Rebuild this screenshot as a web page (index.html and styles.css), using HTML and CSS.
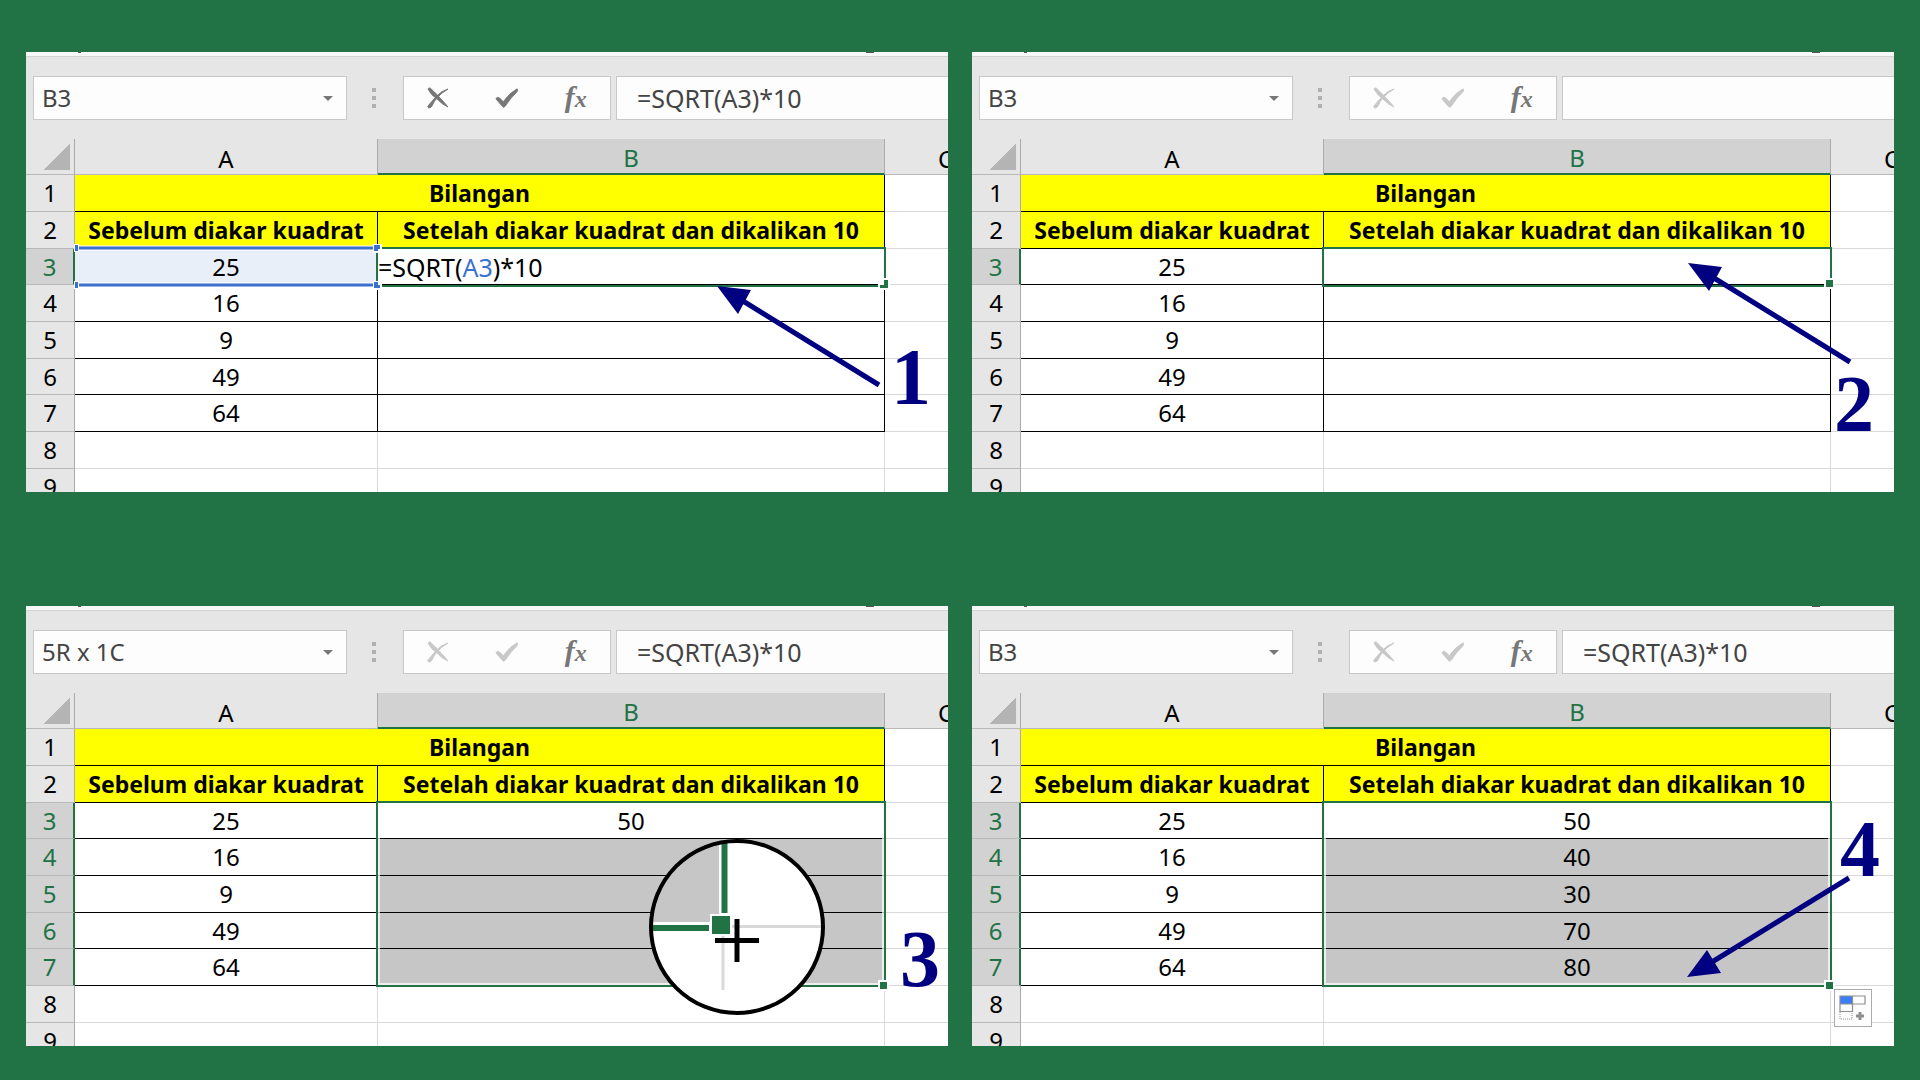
FILE: index.html
```
<!DOCTYPE html>
<html lang="id">
<head>
<meta charset="utf-8">
<title>SQRT di Excel</title>
<link rel="stylesheet" href="styles.css">
</head>
<body>
<svg class="defs" aria-hidden="true">
  <symbol id="cancel" viewBox="0 0 24 24"><path d="M2 3C3 1 5 2 7 5Q11 8 14 12Q18 16 22 21Q17 19 11 13Q5 9 2 3Z"/><path d="M22 3Q15 7 11 12Q8 15 6 20C4 23 1 22 2 20Q6 15 10 11Q15 5 22 3Z"/></symbol>
  <symbol id="accept" viewBox="0 0 26 24"><path d="M1 13Q2 10 5 12L9 16Q15 7 24 2Q25 3 24 5Q16 13 11 21Q9 23 8 21Z"/></symbol>
  <symbol id="arrow" viewBox="0 0 164 102" overflow="visible"><path d="M26 15L162 99" stroke="#000080" stroke-width="5"/><path d="M0 0L34 4L21 28Z" fill="#000080"/></symbol>
</svg>
<main class="board">

  <section class="panel">
    <div class="ribbon"></div>
    <div class="bar">
      <div class="namebox"><input class="name" aria-label="Kotak nama" value="B3"><button class="drop" aria-label="Daftar nama"></button></div>
      <div class="dots"><i></i><i></i><i></i></div>
      <div class="tools">
        <button aria-label="Batal"><svg class="icon"><use href="#cancel"/></svg></button>
        <button aria-label="Masukkan"><svg class="icon"><use href="#accept"/></svg></button>
        <button class="fx" aria-label="Sisipkan fungsi">f<span>x</span></button>
      </div>
      <input class="formula" aria-label="Rumus" value="=SQRT(A3)*10">
    </div>
    <table class="sheet">
      <colgroup><col class="c-row"><col class="c-a"><col class="c-b"><col></colgroup>
      <thead><tr><th class="corner"></th><th>A</th><th class="on">B</th><th class="last">C</th></tr></thead>
      <tbody>
        <tr class="title"><th>1</th><td colspan="2">Bilangan</td><td></td></tr>
        <tr class="title"><th>2</th><td>Sebelum diakar kuadrat</td><td>Setelah diakar kuadrat dan dikalikan 10</td><td></td></tr>
        <tr><th class="on">3</th><td class="ref">25</td><td class="edit">=SQRT(<span>A3</span>)*10</td><td></td></tr>
        <tr><th>4</th><td>16</td><td></td><td></td></tr>
        <tr><th>5</th><td>9</td><td></td><td></td></tr>
        <tr><th>6</th><td>49</td><td></td><td></td></tr>
        <tr><th>7</th><td>64</td><td></td><td></td></tr>
        <tr class="plain"><th>8</th><td></td><td></td><td></td></tr>
        <tr class="plain"><th>9</th><td></td><td></td><td></td></tr>
      </tbody>
    </table>
    <svg class="overlay" viewBox="0 0 922 440">
      <rect class="sel" x="351" y="196" width="508" height="38"/>
      <path d="M852 230H857V226H864V238H852Z" fill="#fff"/>
      <path d="M854 233H858V228H862V236H854Z" fill="#217346"/>
      <path d="M50 196H351M50 233H351" stroke="#fff" stroke-width="5"/>
      <path d="M50 196H351M50 233H351" stroke="#3a70d0" stroke-width="3"/>
      <path d="M48 192H53V200H48ZM48 229H53V237H48ZM347 192H356V201H347ZM347 229H356V238H347Z" fill="#fff"/>
      <path d="M49 193H52V199H49ZM49 230H52V236H49ZM348 193H354V197H352V199H348ZM348 230H352V233H354V236H348Z" fill="#3a70d0"/>
      <use href="#arrow" x="691" y="234" width="164" height="102"/>
      <text class="step" x="865" y="352">1</text>
    </svg>
  </section>

  <section class="panel">
    <div class="ribbon"></div>
    <div class="bar">
      <div class="namebox"><input class="name" aria-label="Kotak nama" value="B3"><button class="drop" aria-label="Daftar nama"></button></div>
      <div class="dots"><i></i><i></i><i></i></div>
      <div class="tools">
        <button disabled aria-label="Batal"><svg class="icon"><use href="#cancel"/></svg></button>
        <button disabled aria-label="Masukkan"><svg class="icon"><use href="#accept"/></svg></button>
        <button class="fx" aria-label="Sisipkan fungsi">f<span>x</span></button>
      </div>
      <input class="formula" aria-label="Rumus" value="">
    </div>
    <table class="sheet">
      <colgroup><col class="c-row"><col class="c-a"><col class="c-b"><col></colgroup>
      <thead><tr><th class="corner"></th><th>A</th><th class="on">B</th><th class="last">C</th></tr></thead>
      <tbody>
        <tr class="title"><th>1</th><td colspan="2">Bilangan</td><td></td></tr>
        <tr class="title"><th>2</th><td>Sebelum diakar kuadrat</td><td>Setelah diakar kuadrat dan dikalikan 10</td><td></td></tr>
        <tr><th class="on">3</th><td>25</td><td></td><td></td></tr>
        <tr><th>4</th><td>16</td><td></td><td></td></tr>
        <tr><th>5</th><td>9</td><td></td><td></td></tr>
        <tr><th>6</th><td>49</td><td></td><td></td></tr>
        <tr><th>7</th><td>64</td><td></td><td></td></tr>
        <tr class="plain"><th>8</th><td></td><td></td><td></td></tr>
        <tr class="plain"><th>9</th><td></td><td></td><td></td></tr>
      </tbody>
    </table>
    <svg class="overlay" viewBox="0 0 922 440">
      <rect class="sel" x="351" y="196" width="508" height="38"/>
      <rect class="handle" x="853" y="227" width="9" height="9"/>
      <use href="#arrow" x="716" y="211" width="164" height="102"/>
      <text class="step" x="862" y="379">2</text>
    </svg>
  </section>

  <section class="panel">
    <div class="ribbon"></div>
    <div class="bar">
      <div class="namebox"><input class="name" aria-label="Kotak nama" value="5R x 1C"><button class="drop" aria-label="Daftar nama"></button></div>
      <div class="dots"><i></i><i></i><i></i></div>
      <div class="tools">
        <button disabled aria-label="Batal"><svg class="icon"><use href="#cancel"/></svg></button>
        <button disabled aria-label="Masukkan"><svg class="icon"><use href="#accept"/></svg></button>
        <button class="fx" aria-label="Sisipkan fungsi">f<span>x</span></button>
      </div>
      <input class="formula" aria-label="Rumus" value="=SQRT(A3)*10">
    </div>
    <table class="sheet">
      <colgroup><col class="c-row"><col class="c-a"><col class="c-b"><col></colgroup>
      <thead><tr><th class="corner"></th><th>A</th><th class="on">B</th><th class="last">C</th></tr></thead>
      <tbody>
        <tr class="title"><th>1</th><td colspan="2">Bilangan</td><td></td></tr>
        <tr class="title"><th>2</th><td>Sebelum diakar kuadrat</td><td>Setelah diakar kuadrat dan dikalikan 10</td><td></td></tr>
        <tr><th class="on">3</th><td>25</td><td>50</td><td></td></tr>
        <tr><th class="on">4</th><td>16</td><td class="picked"></td><td></td></tr>
        <tr><th class="on">5</th><td>9</td><td class="picked"></td><td></td></tr>
        <tr><th class="on">6</th><td>49</td><td class="picked"></td><td></td></tr>
        <tr><th class="on">7</th><td>64</td><td class="picked"></td><td></td></tr>
        <tr class="plain"><th>8</th><td></td><td></td><td></td></tr>
        <tr class="plain"><th>9</th><td></td><td></td><td></td></tr>
      </tbody>
    </table>
    <svg class="overlay" viewBox="0 0 922 440">
      <rect class="inner" x="353" y="198" width="504" height="180"/>
      <rect class="sel" x="351" y="196" width="508" height="184"/>
      <rect class="handle" x="853" y="375" width="9" height="9"/>
      <clipPath id="lens"><circle cx="711" cy="321" r="86"/></clipPath>
      <g clip-path="url(#lens)">
        <rect x="620" y="230" width="180" height="180" fill="#fff"/>
        <rect x="620" y="230" width="73" height="86" fill="#c6c6c6"/>
        <path d="M704 320.500H800M697 328V384" stroke="#d9d9d9" stroke-width="3"/>
        <path d="M698.500 230V307M620 322H683" stroke="#217346" stroke-width="6"/>
        <rect x="685" y="309" width="20" height="20" fill="#217346" stroke="#fff" stroke-width="2"/>
        <path d="M689 334.500H733M711 313V356" stroke="#000" stroke-width="5"/>
      </g>
      <circle cx="711" cy="321" r="86" fill="none" stroke="#000" stroke-width="4"/>
      <text class="step" x="874" y="380">3</text>
    </svg>
  </section>

  <section class="panel">
    <div class="ribbon"></div>
    <div class="bar">
      <div class="namebox"><input class="name" aria-label="Kotak nama" value="B3"><button class="drop" aria-label="Daftar nama"></button></div>
      <div class="dots"><i></i><i></i><i></i></div>
      <div class="tools">
        <button disabled aria-label="Batal"><svg class="icon"><use href="#cancel"/></svg></button>
        <button disabled aria-label="Masukkan"><svg class="icon"><use href="#accept"/></svg></button>
        <button class="fx" aria-label="Sisipkan fungsi">f<span>x</span></button>
      </div>
      <input class="formula" aria-label="Rumus" value="=SQRT(A3)*10">
    </div>
    <table class="sheet">
      <colgroup><col class="c-row"><col class="c-a"><col class="c-b"><col></colgroup>
      <thead><tr><th class="corner"></th><th>A</th><th class="on">B</th><th class="last">C</th></tr></thead>
      <tbody>
        <tr class="title"><th>1</th><td colspan="2">Bilangan</td><td></td></tr>
        <tr class="title"><th>2</th><td>Sebelum diakar kuadrat</td><td>Setelah diakar kuadrat dan dikalikan 10</td><td></td></tr>
        <tr><th class="on">3</th><td>25</td><td>50</td><td></td></tr>
        <tr><th class="on">4</th><td>16</td><td class="picked">40</td><td></td></tr>
        <tr><th class="on">5</th><td>9</td><td class="picked">30</td><td></td></tr>
        <tr><th class="on">6</th><td>49</td><td class="picked">70</td><td></td></tr>
        <tr><th class="on">7</th><td>64</td><td class="picked">80</td><td></td></tr>
        <tr class="plain"><th>8</th><td></td><td></td><td></td></tr>
        <tr class="plain"><th>9</th><td></td><td></td><td></td></tr>
      </tbody>
    </table>
    <svg class="overlay" viewBox="0 0 922 440">
      <rect class="inner" x="353" y="198" width="504" height="180"/>
      <rect class="sel" x="351" y="196" width="508" height="184"/>
      <rect class="handle" x="853" y="375" width="9" height="9"/>
      <path d="M740 356L877 272" stroke="#000080" stroke-width="5"/>
      <path d="M715 371L735 344L749 367Z" fill="#000080"/>
      <text class="step" x="868" y="270">4</text>
    </svg>
    <button class="autofill" aria-label="Opsi isi otomatis">
      <svg viewBox="0 0 36 36" fill="none">
        <path d="M5 6H17V14H5Z" fill="#3c7cff"/>
        <path d="M5 6H30V14H5ZM17.500 6V21.500H5V6" stroke="#8e8e8e" stroke-width="1.200"/>
        <path d="M5 22V29H17V22" stroke="#8e8e8e" stroke-dasharray="1 1"/>
        <path d="M25 22V30M21 26H29" stroke="#8e8e8e" stroke-width="3"/>
      </svg>
    </button>
  </section>

</main>
</body>
</html>
```
FILE: styles.css
```
* { box-sizing: border-box; }

body {
  margin: 0;
  background: #217346;
  color: #000;
  font: 24px/32px "Noto Sans", sans-serif;
}

button, input { font: inherit; color: inherit; margin: 0; padding: 0; border: 0; background: none; border-radius: 0; }

.defs { display: none; }

.board {
  display: grid;
  grid-template-columns: 1fr 1fr;
  gap: 114px 24px;
  padding: 52px 26px 34px;
}

.panel { position: relative; height: 440px; overflow: hidden; background: #fff; min-width: 0; }

.ribbon {
  display: flex;
  justify-content: space-between;
  height: 5px;
  padding: 0 74px 0 52px;
  background: #f7f7f7;
  border-bottom: 1px solid #d4d4d4;
}
.ribbon::before, .ribbon::after { content: ""; width: 3px; height: 1px; background: #555; }
.ribbon::after { width: 8px; }

.bar {
  display: flex;
  height: 82px;
  padding: 19px 0 19px 7px;
  background: #e6e6e6;
  color: #444;
}
.namebox, .tools { display: flex; background: #fdfdfd; border: 1px solid #c8c8c8; }
.namebox { width: 314px; }
.name { flex: 1; min-width: 0; padding-left: 8px; }
.drop { display: grid; place-items: center; width: 36px; }
.drop::before { content: ""; border: 5px solid transparent; border-top-color: #777; border-bottom: 0; }
.dots { display: flex; flex-direction: column; align-items: center; justify-content: center; gap: 4px; width: 56px; padding-right: 2px; }
.dots i { width: 4px; height: 4px; background: #b0b0b0; }
.tools { width: 208px; color: #777; }
.tools button { flex: 1; display: grid; place-items: center; }
.tools button:disabled { color: #c8c8c8; }
.icon { width: 24px; height: 24px; fill: currentColor; stroke: currentColor; stroke-width: 1; }
.tools .fx { display: block; font: italic bold 30px/34px "Liberation Serif", serif; }
.fx span { font-size: 24px; }
.formula { flex: 1; min-width: 0; margin-left: 5px; padding-left: 20px; font-size: 25px; background: #fdfdfd; border: 1px solid #c8c8c8; border-right: 0; }

.sheet { width: 100%; table-layout: fixed; border-collapse: separate; border-spacing: 0; }
.c-row { width: 49px; }
.c-a { width: 303px; }
.c-b { width: 507px; }
th, td { padding: 0; height: 37px; line-height: 32px; text-align: center; white-space: nowrap; overflow: hidden; }
th { background: #e6e6e6; font-weight: 400; border-right: 1px solid #ababab; border-bottom: 1px solid #b8b8b8; }
tr:nth-child(3n) > * { height: 36px; }
tr > th.on { background: #d2d2d2; color: #217346; }
tbody th.on { border-right: 2px solid #217346; }

thead tr > th { height: 36px; padding-top: 4px; line-height: 30px; }
thead tr > th.on { border-bottom: 2px solid #217346; }
thead th.last { padding-left: 53px; text-align: left; border-right: 0; }
.corner { background: linear-gradient(135deg, transparent 50%, #b4b4b4 50%) 17px 5px / 27px 26px no-repeat #e6e6e6; }

td { border-right: 1px solid #000; border-bottom: 1px solid #000; }
td:last-child { border-right: 0; border-bottom-color: #d9d9d9; }
.plain td { border-color: #d9d9d9; }
.title td { font-size: 23px; font-weight: 700; }
.title td:not(:last-child) { background: #ff0; }
.ref { background: #e9eff9; }
td.edit { text-align: left; font-size: 25px; }
.edit span { color: #3a70d0; }
.picked { background: #c6c6c6; }

.overlay { position: absolute; left: 0; top: 0; width: 922px; height: 440px; pointer-events: none; }
.sel { fill: none; stroke: #217346; stroke-width: 2; }
.inner { fill: none; stroke: #fff; stroke-width: 2; opacity: .7; }
.handle { fill: #217346; stroke: #fff; stroke-width: 2; }
.step { fill: #000080; font: bold 80px "Liberation Serif", serif; }

.autofill { position: absolute; left: 862px; top: 383px; width: 38px; height: 38px; background: #fdfdfd; border: 1px solid #ababab; }
.autofill svg { display: block; }
```
